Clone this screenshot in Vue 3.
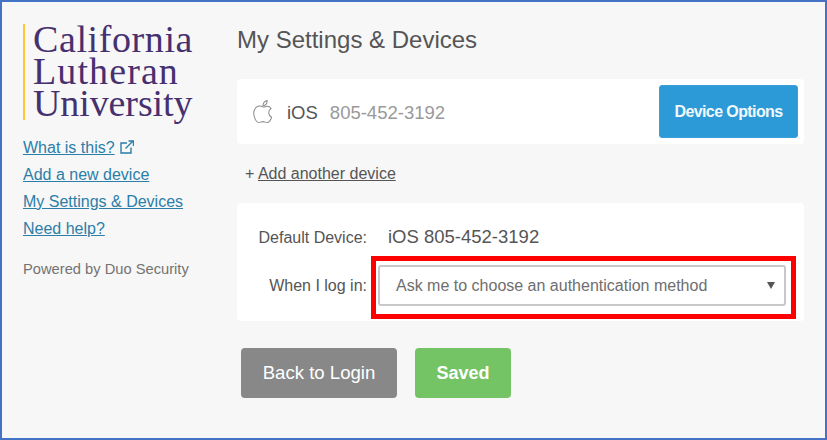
<template>
  <div class="frame">
    <aside class="sidebar">
      <div class="logo">
        <div class="logo-line">California</div>
        <div class="logo-line logo-wide">Lutheran</div>
        <div class="logo-line logo-tight">University</div>
      </div>
      <nav class="side-links">
        <a class="side-link">What is this?<svg class="ext" viewBox="0 0 14 14" fill="none" stroke="#2b7ea8" stroke-width="1.4"><path d="M7 3H1v10h10V7.500" /><path d="M5.500 8.500 12.500 1.500M8.500 1h5v5" /></svg></a>
        <a class="side-link">Add a new device</a>
        <a class="side-link">My Settings &amp; Devices</a>
        <a class="side-link">Need help?</a>
      </nav>
      <p class="powered">Powered by Duo Security</p>
    </aside>

    <main class="content">
      <h1 class="title">My Settings &amp; Devices</h1>

      <div class="device-card">
        <svg class="apple" viewBox="0 0 24 28" width="22" height="26" fill="none" stroke="#8c8c8c" stroke-width="1.100">
          <path d="M12 8.600c-2-1.300-5-1.700-7.200.2C2.300 10.900 1.300 14.300 2.300 18.200c.8 3.200 2.800 7.300 5.300 7.300 1.600 0 2.500-1 4.400-1s2.700 1 4.400 1c2.200 0 4-2.800 5-5.800-3.700-1.600-4.300-7.200-.6-9.500-1.500-2.200-3.800-2.700-5.500-2.300-1.300.3-2.400 1-3.300.7Z" />
          <path d="M12 7.200c0-2.800 1.800-5 4.500-5.700.1 2.900-1.700 5.400-4.500 5.700Z" />
        </svg>
        <span class="os">iOS</span>
        <span class="number">805-452-3192</span>
        <button class="options-btn">Device Options</button>
      </div>

      <div class="add-row">+ <a class="add-link">Add another device</a></div>

      <div class="default-card">
        <div class="row row-default">
          <span class="label">Default Device:</span>
          <span class="value">iOS 805-452-3192</span>
        </div>
        <div class="row row-login">
          <span class="label">When I log in:</span>
          <div class="highlight">
            <div class="select">
              <span>Ask me to choose an authentication method</span>
              <span class="caret"></span>
            </div>
          </div>
        </div>
      </div>

      <div class="actions">
        <button class="btn btn-back">Back to Login</button>
        <button class="btn btn-saved">Saved</button>
      </div>
    </main>
  </div>
</template>

<script setup>
</script>

<style>
body {
  margin: 0;
  background: #fff;
}
</style>

<style scoped>
.frame {
  box-sizing: border-box;
  width: 827px;
  height: 440px;
  display: flex;
  background: #f7f7f7;
  border: 2px solid #4472c4;
  font-family: "Liberation Sans", Arial, sans-serif;
  overflow: hidden;
}

/* sidebar */
.sidebar {
  width: 214px;
  flex: none;
  padding: 22px 0 0 21px;
  box-sizing: border-box;
}

.logo {
  display: flow-root;
  height: 96px;
  box-sizing: border-box;
  border-left: 2px solid #fdc82f;
  padding-left: 8px;
  font-family: "Liberation Serif", "Times New Roman", serif;
  font-size: 38px;
  line-height: 32.500px;
  letter-spacing: 0.6px;
  color: #46306f;
  white-space: nowrap;
}

.logo-line {
  height: 32px;
  margin-top: -1px;
  margin-bottom: 1px;
}

.logo-wide {
  letter-spacing: 1.100px;
}

.logo-tight {
  letter-spacing: -0.1px;
}

.side-links {
  display: flex;
  flex-direction: column;
  align-items: flex-start;
  gap: 8px;
  margin-top: 18px;
}

.side-link {
  font-size: 16px;
  line-height: 19px;
  color: #2b7ea8;
  text-decoration: underline;
  white-space: nowrap;
}

.ext {
  margin-left: 5px;
  vertical-align: -1px;
  width: 14px;
  height: 14px;
}

.powered {
  margin: 23px 0 0;
  font-size: 14.700px;
  line-height: 17px;
  color: #737373;
  white-space: nowrap;
}

/* main column */
.content {
  width: 567px;
  flex: none;
  margin-left: 21px;
  padding-top: 24px;
}

.title {
  margin: 0;
  font-size: 24px;
  line-height: 28px;
  font-weight: 400;
  color: #555;
}

.device-card {
  display: flex;
  align-items: center;
  height: 65px;
  margin-top: 25px;
  background: #fff;
  border-radius: 4px;
  padding: 0 6px 0 15px;
  box-sizing: border-box;
}

.apple {
  flex: none;
}

.os {
  margin: 2px 0 0 13px;
  font-size: 18.500px;
  color: #555;
}

.number {
  margin: 2px 0 0 12px;
  font-size: 18.500px;
  color: #999;
}

.options-btn {
  margin-left: auto;
  width: 139px;
  height: 53px;
  border: 1px solid #3a9fd8;
  border-radius: 3px;
  background: #2b9ad6;
  color: #f2f8fc;
  font: bold 16px "Liberation Sans", Arial, sans-serif;
  letter-spacing: -0.6px;
  padding: 0;
}

.add-row {
  margin: 20px 0 0 8px;
  height: 19px;
  font-size: 16px;
  line-height: 19px;
  color: #555;
}

.add-link {
  text-decoration: underline;
}

.default-card {
  margin-top: 20px;
  height: 118px;
  background: #fff;
  border-radius: 4px;
  padding: 23px 0 0;
  box-sizing: border-box;
}

.row {
  display: flex;
  align-items: center;
}

.row-default {
  height: 22px;
}

.row-login {
  margin-top: 8px;
  height: 63px;
}

.label {
  width: 130px;
  flex: none;
  text-align: right;
  font-size: 16px;
  color: #555;
  white-space: nowrap;
}

.row-default .label {
  margin-top: 1px;
}

.row-login .label {
  margin-top: -4px;
}

.value {
  margin-left: 21px;
  font-size: 18.500px;
  color: #555;
}

.highlight {
  box-sizing: border-box;
  width: 425px;
  height: 63px;
  margin-left: 4px;
  padding: 4px 5px 8px 2px;
  border: 5px solid #ff0000;
}

.select {
  box-sizing: border-box;
  height: 100%;
  display: flex;
  align-items: center;
  justify-content: space-between;
  padding: 1px 9px 0 16px;
  background: #fff;
  border: 2px solid #c8c8c8;
  border-radius: 3px;
  font-size: 16px;
  color: #6e6e6e;
  white-space: nowrap;
}

.caret {
  width: 0;
  height: 0;
  margin-bottom: 2px;
  border-left: 4px solid transparent;
  border-right: 4px solid transparent;
  border-top: 7px solid #555;
}

.actions {
  display: flex;
  gap: 18px;
  margin: 27px 0 0 4px;
}

.btn {
  height: 50px;
  border: 1px solid transparent;
  border-radius: 4px;
  color: #fff;
  font: 18.600px "Liberation Sans", Arial, sans-serif;
  padding: 0;
}

.btn-back {
  width: 156px;
  background: #888;
}

.btn-saved {
  width: 96px;
  background: #74c365;
  font-size: 18px;
  font-weight: bold;
}
</style>
